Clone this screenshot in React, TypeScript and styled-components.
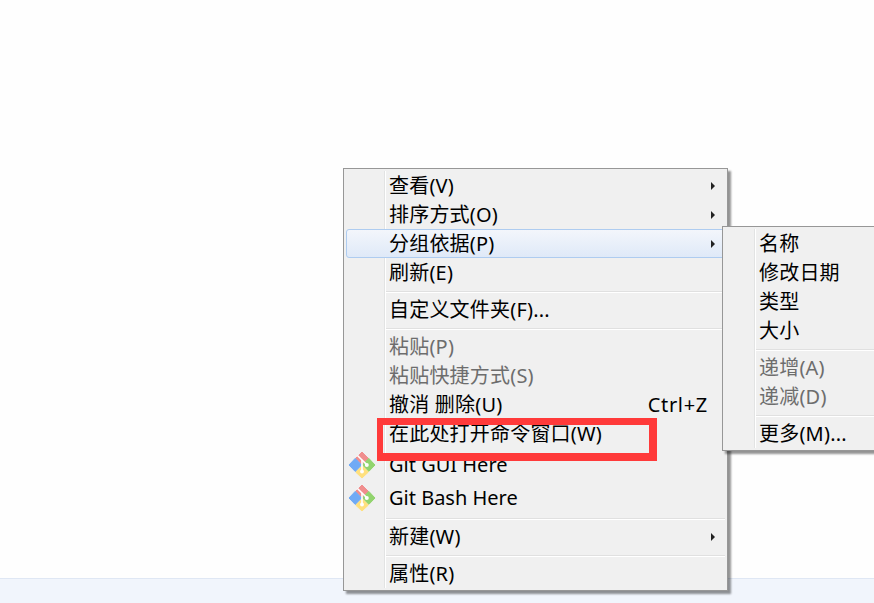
import React from "react";
import styled, { createGlobalStyle } from "styled-components";

const Global = createGlobalStyle`
  html, body { margin: 0; padding: 0; width: 874px; height: 603px; overflow: hidden; background: #fefefe; }
  #root { width: 874px; height: 603px; }
`;

const Desktop = styled.div`
  position: relative;
  width: 874px;
  height: 603px;
  overflow: hidden;
  display: flex;
  flex-direction: column;
  justify-content: flex-end;
  font-family: "Noto Sans", "Noto Sans CJK SC", sans-serif;
  font-size: 20px;
  color: #000;
`;

const BottomBar = styled.div`
  height: 25px;
  box-sizing: border-box;
  background: #f1f5fc;
  border-top: 1px solid #dfe7f4;
`;

const MenuPanel = styled.div<{ $gutter: number }>`
  position: absolute;
  box-sizing: border-box;
  background: #f0f0f0;
  border: 1px solid #979797;
  padding: 2px;
  box-shadow: 3px 3px 2px rgba(0, 0, 0, 0.42);
  &::before {
    content: "";
    position: absolute;
    top: 2px;
    bottom: 2px;
    left: ${(p) => p.$gutter}px;
    width: 1px;
    background: #e2e3e3;
    box-shadow: 1px 0 0 #fff;
  }
`;

const MainMenu = styled(MenuPanel)`
  left: 343px;
  top: 168px;
  width: 385px;
`;

const SubMenu = styled(MenuPanel)`
  left: 378px;
  top: 57px;
  width: 220px;
  z-index: 2;
`;

const Row = styled.div<{ $height?: number; $hot?: boolean; $disabled?: boolean }>`
  position: relative;
  z-index: 1;
  box-sizing: border-box;
  display: flex;
  align-items: center;
  height: ${(p) => p.$height ?? 29}px;
  border: 1px solid ${(p) => (p.$hot ? "#aeccf0" : "transparent")};
  border-radius: 3px;
  background: ${(p) => (p.$hot ? "linear-gradient(#f3f6fb, #dfe9f8)" : "transparent")};
  color: ${(p) => (p.$disabled ? "#6d6d6d" : "#000")};
  white-space: nowrap;
`;

const IconSlot = styled.div<{ $width: number }>`
  flex: none;
  width: ${(p) => p.$width}px;
  height: 28px;
  display: flex;
  align-items: center;
  padding-left: 1px;
  box-sizing: border-box;
`;

const Label = styled.span<{ $latin?: boolean }>`
  flex: 1;
  line-height: 27px;
  letter-spacing: ${(p) => (p.$latin ? "0" : "0.2px")};
`;

const Shortcut = styled.span`
  flex: none;
  margin-right: 16px;
  line-height: 27px;
  letter-spacing: 0.7px;
`;

const Arrow = styled.span`
  flex: none;
  width: 0;
  height: 0;
  margin-right: 9px;
  border-left: 4px solid #222;
  border-top: 4px solid transparent;
  border-bottom: 4px solid transparent;
`;

const Separator = styled.div<{ $indent: number }>`
  position: relative;
  z-index: 1;
  height: 8px;
  margin-left: ${(p) => p.$indent}px;
  display: flex;
  align-items: center;
  &::after {
    content: "";
    display: block;
    width: 100%;
    height: 1px;
    background: #e0e0e0;
    box-shadow: 0 1px 0 #fff;
  }
`;

const Highlight = styled.div`
  position: absolute;
  z-index: 3;
  left: 377px;
  top: 418px;
  width: 280px;
  height: 43px;
  box-sizing: border-box;
  border: solid #ff3a3a;
  border-width: 7px 8px 8px 6px;
`;

const GitIcon = () => (
  <svg width="28" height="28" viewBox="0 0 28 28">
    <path d="M14 1 L20.4 7.4 L14 13.6 L7.6 7.4 Z" fill="#f08e8e" stroke="#f08e8e" strokeLinejoin="round" />
    <path d="M20.8 7.4 L27 14 L20.8 20.4 L14.4 14 Z" fill="#92d46e" stroke="#92d46e" strokeLinejoin="round" />
    <path d="M14 14.6 L20.4 21 L14 27 L7.6 21 Z" fill="#ffe07e" stroke="#ffe07e" strokeLinejoin="round" />
    <path d="M7.2 7.4 L13.6 14 L7.2 20.4 L1 14 Z" fill="#70aaf5" stroke="#70aaf5" strokeLinejoin="round" />
    <path d="M9.5 4.5 L14 9 L14 19" fill="none" stroke="#fff" strokeWidth="1.6" />
    <path d="M14 9 L18 12.8" fill="none" stroke="#fff" strokeWidth="1.6" />
    <circle cx="14" cy="20.5" r="1.9" fill="#fff" />
    <circle cx="18.8" cy="14" r="2" fill="#fff" />
  </svg>
);

type Item =
  | { sep: true }
  | { label: string; arrow?: boolean; disabled?: boolean; hot?: boolean; shortcut?: string; git?: boolean };

const mainItems: Item[] = [
  { label: "查看(V)", arrow: true },
  { label: "排序方式(O)", arrow: true },
  { label: "分组依据(P)", arrow: true, hot: true },
  { label: "刷新(E)" },
  { sep: true },
  { label: "自定义文件夹(F)..." },
  { sep: true },
  { label: "粘贴(P)", disabled: true },
  { label: "粘贴快捷方式(S)", disabled: true },
  { label: "撤消 删除(U)", shortcut: "Ctrl+Z" },
  { label: "在此处打开命令窗口(W)" },
  { label: "Git GUI Here", git: true },
  { label: "Git Bash Here", git: true },
  { sep: true },
  { label: "新建(W)", arrow: true },
  { sep: true },
  { label: "属性(R)" },
];

const subItems: Item[] = [
  { label: "名称" },
  { label: "修改日期" },
  { label: "类型" },
  { label: "大小" },
  { sep: true },
  { label: "递增(A)", disabled: true },
  { label: "递减(D)", disabled: true },
  { sep: true },
  { label: "更多(M)..." },
];

const renderItems = (items: Item[], slot: number) =>
  items.map((item, i) =>
    "sep" in item ? (
      <Separator key={i} $indent={slot - 2} />
    ) : (
      <Row key={i} $hot={item.hot} $disabled={item.disabled} $height={item.git ? 33 : 29}>
        <IconSlot $width={slot}>{item.git && <GitIcon />}</IconSlot>
        <Label $latin={item.git}>{item.label}</Label>
        {item.shortcut && <Shortcut>{item.shortcut}</Shortcut>}
        {item.arrow && <Arrow />}
      </Row>
    )
  );

export default function App() {
  return (
    <>
      <Global />
      <Desktop>
        <BottomBar />
        <MainMenu $gutter={40}>
          {renderItems(mainItems, 42)}
          <SubMenu $gutter={31}>{renderItems(subItems, 33)}</SubMenu>
        </MainMenu>
        <Highlight />
      </Desktop>
    </>
  );
}
